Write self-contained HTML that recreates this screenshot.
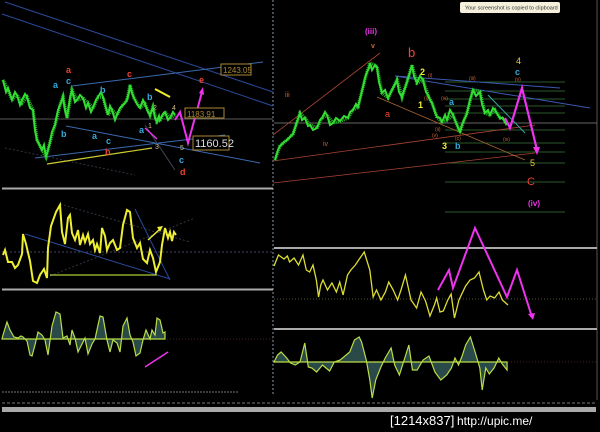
<!DOCTYPE html>
<html><head><meta charset="utf-8"><style>
html,body{margin:0;padding:0;background:#000;width:600px;height:432px;overflow:hidden}
svg{display:block}
text{font-family:"Liberation Sans",sans-serif}
</style></head><body>
<svg width="600" height="432" viewBox="0 0 600 432" xmlns="http://www.w3.org/2000/svg">
<rect width="600" height="432" fill="#000"/>
<!-- dividers -->
<line x1="273" y1="0" x2="273" y2="396" stroke="#8899aa" stroke-dasharray="2,2" stroke-width="1"/>
<line x1="597" y1="0" x2="597" y2="400" stroke="#555" stroke-width="1"/>
<line x1="2" y1="188.5" x2="273" y2="188.5" stroke="#aaa" stroke-width="2"/>
<line x1="2" y1="289.5" x2="273" y2="289.5" stroke="#aaa" stroke-width="2"/>
<line x1="274" y1="248" x2="597" y2="248" stroke="#aaa" stroke-width="2"/>
<line x1="274" y1="329" x2="597" y2="329" stroke="#aaa" stroke-width="2"/>
<line x1="2" y1="392" x2="238" y2="392" stroke="#777" stroke-dasharray="2,1"/>
<line x1="2" y1="403" x2="596" y2="403" stroke="#777" stroke-dasharray="3,2"/>
<rect x="2" y="407" width="594" height="5" fill="#aaa"/>
<text x="390" y="425" fill="#fff" font-size="13">[1214x837]</text>
<text x="457" y="425" fill="#fff" font-size="12">http://upic.me/</text>

<!-- LEFT MAIN -->
<line x1="0" y1="119" x2="273" y2="119" stroke="#777" stroke-width="0.8"/>
<line x1="5" y1="2" x2="273" y2="92" stroke="#2a4a9a" stroke-width="1"/>
<line x1="2" y1="14" x2="273" y2="106" stroke="#2a4a9a" stroke-width="1"/>
<line x1="72" y1="86" x2="263" y2="62" stroke="#3a6ab0"/>
<line x1="66" y1="126" x2="260" y2="163" stroke="#3a6ab0"/>
<line x1="35" y1="158" x2="225" y2="135" stroke="#3a6ab0"/>
<line x1="5" y1="148" x2="135" y2="175" stroke="#334" stroke-dasharray="2,2"/>
<line x1="145" y1="125" x2="175" y2="170" stroke="#445"/>
<line x1="47" y1="164" x2="152" y2="148" stroke="#cc3" stroke-width="1.2"/>
<polyline fill="none" stroke="#2b2" stroke-width="3.5" stroke-dasharray="1,1" points="3,80 8,90 12,100 17,95 22,103 27,97 33,110 37,140 42,150 46,157 50,142 55,125 60,105 63,97 67,118 72,90 77,100 83,98 88,103 93,108 98,97 103,97 108,115 112,110 117,115 122,106 127,100 130,85 134,98 140,108 145,104 150,115 153,107 157,122 160,120 165,112 170,118 175,115"/>
<polyline fill="none" stroke="#3d3" stroke-width="2" points="3,80 6,92 8,88 12,100 15,92 17,95 20,105 22,100 25,94 27,97 30,108 33,110 35,130 37,140 40,146 42,150 44,145 46,157 48,150 50,142 52,132 55,125 58,110 60,105 63,97 65,110 67,118 70,98 72,90 75,102 77,100 80,95 83,98 86,108 88,103 91,112 93,108 96,100 98,97 101,92 103,97 106,108 108,115 110,106 112,110 115,120 117,115 120,108 122,106 125,103 127,100 129,92 130,85 132,93 134,98 137,104 140,108 143,100 145,104 148,112 150,115 152,110 153,107 155,118 157,122 159,116 160,120 163,114 165,112 168,120 170,118 173,112 175,115"/>
<line x1="155" y1="89" x2="170" y2="97" stroke="#ee3" stroke-width="2"/>
<polyline fill="none" stroke="#e3e" stroke-width="2" points="175,120 180,112 188,143 202,92"/>
<polygon points="199,93 203,87 204,95" fill="#e3e"/>
<line x1="145" y1="128" x2="157" y2="139" stroke="#e3e" stroke-width="1.5"/>
<g font-size="9" font-weight="bold">
<text x="66" y="73" fill="#e43">a</text><text x="66" y="84" fill="#3ad">c</text><text x="53" y="88" fill="#3ad">a</text>
<text x="61" y="137" fill="#3ad">b</text><text x="92" y="139" fill="#3ad">a</text><text x="106" y="144" fill="#3ad">c</text>
<text x="100" y="93" fill="#3ad">b</text><text x="127" y="77" fill="#e43">c</text><text x="147" y="100" fill="#3ad">b</text>
<text x="105" y="155" fill="#e43">b</text><text x="139" y="133" fill="#3ad">a</text><text x="179" y="163" fill="#3ad">c</text>
<text x="180" y="175" fill="#e43">d</text><text x="199" y="83" fill="#e43">e</text>
</g>
<g font-size="7" fill="#cb8"><text x="153" y="110">2</text><text x="172" y="110">4</text><text x="148" y="128">1</text><text x="155" y="149">3</text><text x="180" y="150">5</text></g>
<rect x="221" y="64" width="30" height="11" fill="#000" stroke="#a83"/><text x="223" y="73" fill="#a83" font-size="8">1243.05</text>
<rect x="185" y="108" width="39" height="10" fill="#000" stroke="#a83"/><text x="187" y="117" fill="#a83" font-size="8">1183.91</text>
<rect x="193" y="136" width="36" height="14" fill="#000" stroke="#a83"/><text x="195" y="147" fill="#ddd" font-size="11">1160.52</text>

<!-- LEFT OSC1 -->
<line x1="2" y1="252" x2="273" y2="252" stroke="#446" stroke-dasharray="2,2"/>
<line x1="25" y1="234" x2="170" y2="279" stroke="#2a4a9a"/>
<line x1="60" y1="204" x2="190" y2="242" stroke="#334" stroke-dasharray="2,2"/>
<line x1="50" y1="276" x2="195" y2="218" stroke="#334" stroke-dasharray="2,2"/>
<line x1="135" y1="209" x2="170" y2="280" stroke="#2a4a9a"/>
<line x1="50" y1="275" x2="157" y2="275" stroke="#ac3" stroke-width="1.2"/>
<polyline fill="none" stroke="#ee3" stroke-width="2" points="3,255 5,250 8,262 12,262 15,268 18,265 22,254 23,234 26,244 30,261 33,281 37,283 40,275 44,269 47,278 48,248 51,226 56,212 60,205 62,232 65,244 68,218 70,215 72,233 75,240 78,230 80,245 83,235 85,242 88,234 90,244 93,240 95,250 97,244 100,253 102,228 105,236 107,250 110,243 113,240 117,250 120,248 123,225 127,210 130,212 133,238 137,248 140,243 143,259 147,263 150,250 153,258 156,272 160,262 162,245 165,228 168,238 170,232 172,241 174,232 176,235"/>
<line x1="148" y1="240" x2="160" y2="229" stroke="#ee3" stroke-width="1.5"/>
<polygon points="157,227 163,226 160,232" fill="#ee3"/>

<!-- LEFT OSC2 -->
<line x1="2" y1="339" x2="273" y2="339" stroke="#422" stroke-dasharray="1,2"/>
<polygon fill="#2a4a4a" stroke="#bd4" stroke-width="1.2" points="2,339 3,335 7,322 10,330 14,337 18,338 21,336 23,337 27,341 30,355 32,356 35,345 38,332 42,335 45,340 48,355 52,326 56,312 60,314 63,338 67,336 70,345 72,330 75,338 78,352 82,344 85,338 88,354 92,344 95,339 100,316 103,317 107,340 110,352 113,340 117,343 120,352 123,326 127,318 130,335 133,342 136,356 140,353 143,340 146,330 150,339 152,330 155,335 157,318 160,320 163,333 165,332 165,339"/>
<line x1="145" y1="367" x2="168" y2="352" stroke="#e3e" stroke-width="1.5"/>

<!-- RIGHT MAIN -->
<line x1="274" y1="123" x2="597" y2="123" stroke="#888" stroke-width="0.8"/>
<g stroke="#2a5a2a" stroke-width="1">
<line x1="445" y1="82" x2="565" y2="82"/><line x1="445" y1="91" x2="565" y2="91"/><line x1="445" y1="99" x2="565" y2="99"/>
<line x1="445" y1="106" x2="565" y2="106"/><line x1="445" y1="113" x2="565" y2="113"/><line x1="445" y1="130" x2="565" y2="130"/>
<line x1="445" y1="143" x2="565" y2="143"/><line x1="445" y1="152" x2="565" y2="152"/><line x1="445" y1="163" x2="565" y2="163"/>
<line x1="445" y1="182" x2="565" y2="182"/><line x1="445" y1="212" x2="565" y2="212"/>
</g>
<line x1="273" y1="135" x2="380" y2="53" stroke="#a43" stroke-width="0.8"/>
<line x1="273" y1="161" x2="535" y2="125" stroke="#a43" stroke-width="0.8"/>
<line x1="273" y1="183" x2="535" y2="153" stroke="#a43" stroke-width="0.8"/>
<line x1="377" y1="97" x2="525" y2="160" stroke="#a63" stroke-width="0.8"/>
<line x1="395" y1="76" x2="590" y2="108" stroke="#3a5ab0"/>
<line x1="395" y1="76" x2="560" y2="88" stroke="#3a5ab0"/>
<line x1="488" y1="95" x2="525" y2="133" stroke="#3aa"/>
<polyline fill="none" stroke="#2b2" stroke-width="3.5" stroke-dasharray="1,1" points="275,160 280,146 287,140 293,134 300,113 305,118 310,125 317,128 322,118 327,115 333,123 340,121 348,118 353,110 358,107 363,87 367,72 370,63 375,65 377,67 382,93 388,98 393,88 397,80 402,97 407,82 412,65 417,83 423,80 428,95 432,103 437,117 442,122 447,120 453,115 457,125 460,132 464,120 467,113 473,90 480,92 485,113 490,115 495,110 500,118 503,118 507,125"/>
<polyline fill="none" stroke="#3d3" stroke-width="2" points="275,160 278,150 280,146 284,142 287,140 290,137 293,134 296,125 300,113 302,120 305,118 308,126 310,125 313,130 317,128 320,120 322,118 325,112 327,115 330,125 333,123 336,118 340,121 344,116 348,118 350,112 353,110 356,104 358,107 361,95 363,87 365,78 367,72 369,68 370,63 372,70 375,65 377,67 379,82 382,93 385,90 388,98 391,92 393,88 395,84 397,80 399,92 402,97 405,88 407,82 410,72 412,65 414,76 417,83 420,76 423,80 426,92 428,95 430,100 432,103 435,112 437,117 440,118 442,122 445,115 447,120 450,110 453,115 455,120 457,125 459,130 460,132 462,125 464,120 466,116 467,113 470,100 473,90 476,96 480,92 482,104 485,113 488,110 490,115 493,108 495,110 498,115 500,118 503,118 505,122 507,125"/>
<polyline fill="none" stroke="#e3e" stroke-width="2.2" points="505,118 510,128 522,88 537,150"/>
<polygon points="533,147 540,147 537,155" fill="#e3e"/>
<g font-size="9" font-weight="bold">
<text x="365" y="34" fill="#e3e" font-size="8">(iii)</text><text x="371" y="48" fill="#c63" font-size="7">v</text>
<text x="408" y="57" fill="#e43" font-size="13" font-weight="normal">b</text><text x="420" y="75" fill="#ee3">2</text>
<text x="418" y="108" fill="#ee3">1</text><text x="385" y="117" fill="#e43" font-weight="normal">a</text>
<text x="449" y="105" fill="#3ad">a</text><text x="442" y="149" fill="#ee3">3</text><text x="455" y="149" fill="#3ad">b</text>
<text x="516" y="64" fill="#ec4" font-weight="normal">4</text><text x="515" y="75" fill="#3ad">c</text>
<text x="530" y="166" fill="#ec4" font-weight="normal">5</text>
<text x="527" y="185" fill="#e43" font-size="11" font-weight="normal">C</text>
<text x="528" y="206" fill="#e3e" font-size="8">(iv)</text>
<text x="285" y="97" fill="#c63" font-size="7" font-weight="normal">iii</text><text x="323" y="146" fill="#c63" font-size="7" font-weight="normal">iv</text>
</g>
<g font-size="5" fill="#c63"><text x="428" y="77">(i)</text><text x="469" y="80">(iii)</text><text x="515" y="81">(v)</text><text x="441" y="100">(iv)</text><text x="424" y="100">(i)</text><text x="435" y="131">(ii)</text><text x="432" y="137">(v)</text><text x="455" y="140">(c)</text><text x="503" y="141">(iv)</text></g>
<rect x="460" y="2" width="100" height="11" rx="2" fill="#f4f0dc"/>
<text x="465" y="9.5" fill="#333" font-size="5.5">Your screenshot is copied to clipboard</text>

<!-- RIGHT OSC1 -->
<line x1="274" y1="299" x2="597" y2="299" stroke="#553" stroke-dasharray="1,2"/>
<g transform="translate(274,0) scale(1.114,1) translate(-274,0)">
<polyline fill="none" stroke="#dd3" stroke-width="1.3" vector-effect="non-scaling-stroke" points="274,266 278,255 283,259 286,256 288,262 292,258 296,265 300,255 303,270 306,272 309,265 312,280 314,297 316,285 318,280 322,290 326,283 330,292 333,282 336,295 340,275 343,270 347,265 350,260 355,252 360,270 363,297 366,290 370,300 374,292 377,282 381,290 385,300 388,290 392,275 397,300 402,308 406,292 410,301 414,316 418,305 420,298 423,312 426,311 430,300 433,294 436,318 440,300 446,286 450,280 454,278 458,272 462,290 465,300 468,296 472,298 476,292 479,300 484,305"/>
</g>
<polyline fill="none" stroke="#e3e" stroke-width="2" points="438,290 449,270 453,288 475,228 507,297 517,270 532,317"/>
<polygon points="528,314 535,313 533,320" fill="#e3e"/>

<!-- RIGHT OSC2 -->
<line x1="274" y1="362" x2="597" y2="362" stroke="#422" stroke-dasharray="1,2"/>
<g transform="translate(274,0) scale(1.183,1) translate(-274,0)">
<polygon fill="#2a4a4a" stroke="#bd4" stroke-width="1.2" vector-effect="non-scaling-stroke" points="274,362 277,355 280,352 284,357 288,363 292,365 296,362 300,343 303,367 306,368 310,372 315,365 318,368 321,371 325,362 330,360 335,355 338,352 342,340 346,337 348,342 352,360 355,380 357,398 360,380 364,368 368,358 373,348 376,365 380,375 384,360 388,345 391,370 395,370 400,360 405,356 410,372 415,380 420,375 424,368 427,358 430,365 433,356 436,345 440,337 444,352 448,368 450,390 453,368 456,374 460,368 464,358 467,364 471,370 471,362"/>
</g>
</svg>
</body></html>
